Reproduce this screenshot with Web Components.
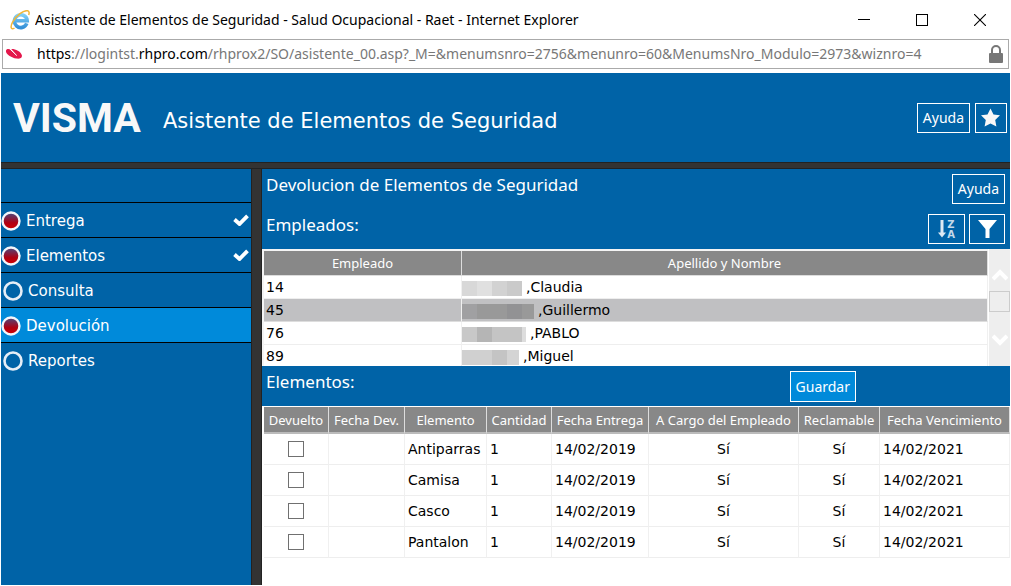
<!DOCTYPE html>
<html lang="es">
<head>
<meta charset="utf-8">
<title>Asistente de Elementos de Seguridad - Salud Ocupacional - Raet</title>
<style>
  html, body { margin: 0; height: 100%; }
  body {
    background: #fff;
    color: #000;
    font-family: "DejaVu Sans", sans-serif;
    --ui: "Noto Sans", "Open Sans", sans-serif;
    --blue: #0063a7;
    --blue-active: #008ada;
    --grid: #f0f0f0;
  }
</style>
</head>
<body>
<wizard-window></wizard-window>

<template id="t-window">
  <style>
    :host { display: flex; flex-direction: column; min-height: 100vh; }
    .app { flex: 1; display: flex; flex-direction: column; margin: 4px 1px 1px; background: var(--blue); }
    .bar { height: 5px; background: #333; border: solid #222; border-width: 1px 0; }
    .main { flex: 1; display: grid; grid-template-columns: 250px 11px minmax(0, 1fr); }
    .split { background: #333; border: solid #222; border-width: 0 1px; }
    side-menu { min-width: 0; }
  </style>
  <window-title>Asistente de Elementos de Seguridad - Salud Ocupacional - Raet - Internet Explorer</window-title>
  <address-bar></address-bar>
  <div class="app">
    <app-header>Asistente de Elementos de Seguridad</app-header>
    <div class="bar"></div>
    <div class="main">
      <side-menu>
        <menu-step state="done" checked>Entrega</menu-step>
        <menu-step state="done" checked>Elementos</menu-step>
        <menu-step>Consulta</menu-step>
        <menu-step state="done" active>Devolución</menu-step>
        <menu-step>Reportes</menu-step>
      </side-menu>
      <div class="split"></div>
      <return-panel></return-panel>
    </div>
  </div>
</template>

<template id="t-title">
  <style>
    :host { display: flex; align-items: center; height: 39px; padding: 0 2px 0 10px; font: 14px/20px var(--ui); }
    .text { flex: 1; margin-left: 5px; white-space: nowrap; overflow: hidden; }
    button { width: 58px; height: 37px; padding: 0; border: 0; background: none; }
    svg { display: block; }
    button svg { margin: auto; }
  </style>
  <svg width="20" height="20" viewBox="0 0 20 20" aria-hidden="true">
    <defs><linearGradient id="g" x1="0" y1="0" x2="0" y2="1"><stop offset="0" stop-color="#7fd0f7"/><stop offset="1" stop-color="#3591d8"/></linearGradient></defs>
    <path d="M16.800 13.400A6.400 6.400 0 1 1 17.200 10.800H6" fill="none" stroke="url(#g)" stroke-width="3.600"/>
    <path d="M4.500 18C1 20.500 0 17 2.600 12.200 6.300 5.500 13.500 0 17.500.8c2 .5 1.800 2.500 1.200 4.200" fill="none" stroke="#f0b73a" stroke-width="1.500"/>
  </svg>
  <span class="text"><slot></slot></span>
  <button aria-label="Minimizar"><svg width="12" height="12"><path d="M0 5.500h12" stroke="#000"/></svg></button>
  <button aria-label="Maximizar"><svg width="12" height="12"><rect x=".5" y=".5" width="11" height="11" fill="none" stroke="#000"/></svg></button>
  <button aria-label="Cerrar"><svg width="12" height="12"><path d="M0 0l12 12M12 0L0 12" stroke="#000" stroke-width="1.100"/></svg></button>
</template>

<template id="t-address">
  <style>
    :host { display: flex; align-items: center; box-sizing: border-box; height: 30px; margin: 0 2px; padding: 0 5px 0 3px; border: 1px solid #aaa; font: 14px/20px var(--ui); color: #777; }
    .url { flex: 1; margin-left: 15px; white-space: nowrap; overflow: hidden; }
    b { font-weight: 400; color: #000; }
    svg { flex: none; }
  </style>
  <svg width="16" height="12" viewBox="0 0 16 12" aria-hidden="true">
    <path d="M0 2.500C.8.800 3 .5 5 2.200L10.800 7.400 5.200 1C9.500.8 14.500 3.200 15.800 7c.8 3-2 4.200-5.500 3.600C5 9.800-.8 6 0 2.500z" fill="#e4174b"/>
    <path d="M4.200 1.200l6.600 6.400" stroke="#fff" stroke-width="1"/>
  </svg>
  <div class="url" role="textbox" aria-label="Dirección" aria-readonly="true"><b>https</b>://logintst.<b>rhpro.com</b>/rhprox2/SO/asistente_00.asp?_M=&amp;menumsnro=2756&amp;menunro=60&amp;MenumsNro_Modulo=2973&amp;wiznro=4</div>
  <svg width="14" height="18" viewBox="0 0 14 18" role="img" aria-label="Conexión segura">
    <path d="M3 9V5a4 4 0 0 1 8 0v4" fill="none" stroke="#777" stroke-width="2"/><rect y="8" width="14" height="10" rx="1" fill="#777"/>
  </svg>
</template>

<template id="t-header">
  <style>
    :host { display: flex; align-items: center; height: 89px; padding: 0 3px 0 12px; color: #fff; box-sizing: border-box; }
    .logo { flex: none; width: 126px; font: bold 41px/48px Roboto, "Liberation Sans", sans-serif; color: #f8f8f8; }
    h1 { flex: 1; margin: 0 0 0 24px; padding-top: 6px; font: 21px/28px "DejaVu Sans", sans-serif; white-space: nowrap; }
    .tools { display: flex; gap: 5px; }
  </style>
  <div class="logo">VISMA</div>
  <h1><slot></slot></h1>
  <div class="tools">
    <action-button>Ayuda</action-button>
    <action-button label="Favoritos"><svg width="20" height="20" viewBox="0 0 20 20"><path d="M9.500 .5l3 6 6.500.8-4.800 4.700 1.200 6.600-5.900-3.200-5.900 3.200 1.200-6.600L0 7.300l6.500-.8z" fill="#f8f8f8"/></svg></action-button>
  </div>
</template>

<template id="t-button">
  <style>
    :host { display: block; flex: none; }
    button { display: flex; align-items: center; justify-content: center; box-sizing: border-box; height: 30px; padding: 0 5px; border: 1px solid #fff; background: none; color: #fff; font: 14px/20px var(--ui); }
    :host([primary]) button { background: var(--blue-active); height: 31px; }
  </style>
  <button><slot></slot></button>
</template>

<template id="t-menu">
  <style>
    :host { display: block; }
    nav { padding-top: 33px; }
  </style>
  <nav aria-label="Pasos"><slot></slot></nav>
</template>

<template id="t-step">
  <style>
    :host { display: block; border-top: 1px solid #000; }
    :host([active]) { background: var(--blue-active); }
    a { display: flex; align-items: center; height: 34px; padding-right: 2px; color: #fff; text-decoration: none; font-size: 15px; line-height: 20px; }
    span { flex: 1; margin-left: 5px; padding-top: 2px; }
    .off, .tick { display: none; }
    :host(:not([state])) .off { display: block; margin-left: 2px; }
    :host(:not([state])) .on { display: none; }
    :host([checked]) .tick { display: block; }
  </style>
  <a href="#">
    <svg class="on" width="20" height="22" viewBox="0 -2 20 22"><defs><linearGradient id="r" x1="0" y1="0" x2="0" y2="1"><stop offset="0" stop-color="#474a82"/><stop offset=".6" stop-color="#b00012"/><stop offset="1" stop-color="#d00000"/></linearGradient></defs><circle cx="10" cy="10" r="8.500" fill="url(#r)" stroke="#f4f6fa" stroke-width="2.400"/></svg>
    <svg class="off" width="20" height="22" viewBox="0 -2 20 22"><circle cx="10" cy="10" r="8.500" fill="none" stroke="#e6eef6" stroke-width="2.600"/></svg>
    <span><slot></slot></span>
    <svg class="tick" width="16" height="12" viewBox="0 0 16 12"><path d="M1.500 5.500l5 4.500L14.500 1.800" fill="none" stroke="#fff" stroke-width="3.800"/></svg>
  </a>
</template>

<template id="t-panel">
  <style>
    :host { display: flex; flex-direction: column; min-width: 0; }
    h2 { margin: 0; flex: 1; font: 17px/22px var(--ui); }
    .row { display: flex; height: 40px; padding: 5px 5px 0 4px; box-sizing: border-box; color: #fff; gap: 4px; }
    .elements { padding-right: 154px; }
    element-table { flex: 1; }
  </style>
  <div class="row"><h2>Devolucion de Elementos de Seguridad</h2><action-button>Ayuda</action-button></div>
  <div class="row"><h2>Empleados:</h2>
    <action-button label="Ordenar"><svg width="25" height="22" viewBox="0 0 25 22"><path d="M8 2v13" stroke="#dce9f3" stroke-width="3"/><path d="M4 14.500h8l-4 5z" fill="#dce9f3"/><g fill="#c4d9ea" font-family="DejaVu Sans, sans-serif" font-weight="700" font-size="10" text-anchor="middle"><text x="17" y="10">Z</text><text x="17" y="20">A</text></g></svg></action-button>
    <action-button label="Filtrar"><svg width="24" height="20" viewBox="0 0 24 20"><path d="M3 1h19l-7.500 9v9h-4v-9z" fill="#fff"/></svg></action-button>
  </div>
  <employee-list></employee-list>
  <div class="row elements"><h2>Elementos:</h2><action-button primary>Guardar</action-button></div>
  <element-table></element-table>
</template>

<template id="t-employees">
  <style>
    :host { display: flex; height: 117px; overflow: hidden; background: #fff; }
    .list { flex: 1; min-width: 0; padding: 2px 0 0 2px; background: #f4f4f4; }
    table { width: 100%; table-layout: fixed; border-collapse: separate; border-spacing: 0; background: #fff; font-size: 14px; line-height: 20px; }
    th { height: 24px; padding: 0; border-bottom: 1px solid #ddd; border-right: 1px solid #ddd; background: #888; color: #fff; font: 13px/20px var(--ui); }
    td { height: 22px; padding: 0 2px; border-bottom: 1px solid #eee; border-right: 1px solid var(--grid); white-space: nowrap; }
    td + td { padding: 0; }
    tr.sel td { background: #c0c0c2; border-bottom-color: #ddd; }
    i { display: inline-block; height: 15px; margin-right: 4px; vertical-align: middle; }
    .a { width: 60px; background: linear-gradient(90deg, #d8d8d8 25%, #e0e0e0 25% 50%, #d2d2d2 50% 75%, #cacaca 75%); }
    .b { width: 72px; background: linear-gradient(90deg, #a0a0a2 15px, #999 15px 45px, #929294 45px 60px, #999 60px); }
    .c { width: 64px; background: linear-gradient(90deg, #c8c8c8 15px, #b5b5b5 15px 30px, #c4c4c4 30px 60px, #ddd 60px); }
    .d { width: 57px; background: linear-gradient(90deg, #d0d0d0 30px, #c4c4c4 30px 45px, #d4d4d4 45px); }
    .scroll { display: flex; flex-direction: column; align-items: center; width: 21px; margin-left: 1px; background: #eee; }
    .thumb { box-sizing: border-box; width: 21px; height: 21px; border: 1px solid #ccc; }
    .up { margin: 20px 0 10px; }
    .down { margin-top: 22px; }
  </style>
  <div class="list">
    <table>
      <colgroup><col style="width:198px"><col></colgroup>
      <thead><tr><th>Empleado</th><th>Apellido y Nombre</th></tr></thead>
      <tbody>
        <tr><td>14</td><td><i class="a"></i>,Claudia</td></tr>
        <tr class="sel"><td>45</td><td><i class="b"></i>,Guillermo</td></tr>
        <tr><td>76</td><td><i class="c"></i>,PABLO</td></tr>
        <tr><td>89</td><td><i class="d"></i>,Miguel</td></tr>
      </tbody>
    </table>
  </div>
  <div class="scroll">
    <svg class="up" width="16" height="12"><path d="M1 10l7-7 7 7" fill="none" stroke="#fff" stroke-width="4"/></svg>
    <div class="thumb"></div>
    <svg class="down" width="16" height="12"><path d="M1 2l7 7 7-7" fill="none" stroke="#fff" stroke-width="4"/></svg>
  </div>
</template>

<template id="t-elements">
  <style>
    :host { display: block; padding: 1px 0 0 2px; background: #fff; }
    table { width: 100%; table-layout: fixed; border-collapse: separate; border-spacing: 0; font-size: 14px; line-height: 20px; }
    th { height: 25px; padding: 0; border-bottom: 2px solid #bbb; border-right: 1px solid #ddd; background: #888; color: #fff; font: 13px/20px var(--ui); white-space: nowrap; }
    td { height: 30px; padding: 0 3px; border-bottom: 1px solid #eee; border-right: 1px solid var(--grid); white-space: nowrap; }
    .mid { text-align: center; }
    input { appearance: none; display: block; box-sizing: border-box; width: 16px; height: 16px; margin: 0 auto; border: 1px solid #707070; background: #fff; }
  </style>
  <table>
    <colgroup><col style="width:65px"><col style="width:76px"><col style="width:82px"><col style="width:65px"><col style="width:97px"><col style="width:150px"><col style="width:81px"><col></colgroup>
    <thead><tr><th>Devuelto</th><th>Fecha Dev.</th><th>Elemento</th><th>Cantidad</th><th>Fecha Entrega</th><th>A Cargo del Empleado</th><th>Reclamable</th><th>Fecha Vencimiento</th></tr></thead>
    <tbody></tbody>
  </table>
</template>

<script>
  const define = (tag, templateId, setup) => customElements.define(tag, class extends HTMLElement {
    constructor() {
      super();
      this.attachShadow({ mode: 'open' }).append(document.getElementById(templateId).content.cloneNode(true));
    }
    connectedCallback() {
      if (setup && !this.ready) { this.ready = true; setup(this, this.shadowRoot); }
    }
  });

  define('action-button', 't-button', (host, root) => {
    if (host.hasAttribute('label')) root.querySelector('button').setAttribute('aria-label', host.getAttribute('label'));
  });
  define('menu-step', 't-step', (host, root) => {
    if (host.hasAttribute('active')) root.querySelector('a').setAttribute('aria-current', 'step');
  });
  define('side-menu', 't-menu');
  define('window-title', 't-title');
  define('address-bar', 't-address');
  define('app-header', 't-header');
  define('employee-list', 't-employees');
  define('element-table', 't-elements', (host, root) => {
    root.querySelector('tbody').innerHTML = ['Antiparras', 'Camisa', 'Casco', 'Pantalon'].map(name =>
      `<tr><td><input type="checkbox" aria-label="Devuelto: ${name}"></td><td></td><td>${name}</td><td>1</td><td>14/02/2019</td><td class="mid">Sí</td><td class="mid">Sí</td><td>14/02/2021</td></tr>`).join('');
  });
  define('return-panel', 't-panel');
  define('wizard-window', 't-window');
</script>
</body>
</html>
